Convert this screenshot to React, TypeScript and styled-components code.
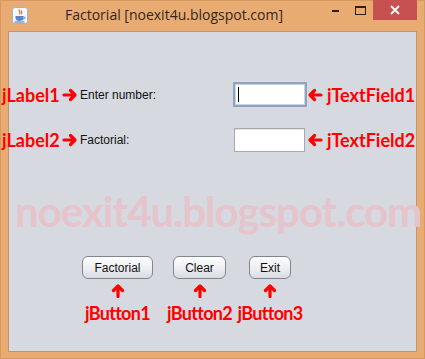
import React from "react";
import styled, { createGlobalStyle } from "styled-components";

const Global = createGlobalStyle`
  html, body { margin: 0; padding: 0; background: #e8ac73; }
  body { width: 425px; height: 359px; overflow: hidden; }
  * { box-sizing: border-box; }
`;

const RED = "#ff0000";

const Frame = styled.div`
  width: 425px;
  height: 359px;
  background: #e8ac73;
  box-shadow: inset 0 0 0 1px #d9995e;
  display: flex;
  flex-direction: column;
  padding: 0 8px 7px;
`;

const TitleBar = styled.div`
  height: 31px;
  display: flex;
  align-items: flex-start;
  flex-shrink: 0;
`;

const AppIcon = styled.svg`
  margin: 7px 0 0 4px;
  width: 16px;
  height: 17px;
  flex-shrink: 0;
`;

const Title = styled.div`
  margin: 5px 0 0 37px;
  font-family: "Open Sans", "Noto Sans", sans-serif;
  font-size: 14px;
  line-height: 20px;
  color: #33261b;
  flex: 1;
  white-space: nowrap;
`;

const Controls = styled.div`
  display: flex;
  align-items: flex-start;
`;

const CtrlBtn = styled.div<{ $w: number }>`
  width: ${(p) => p.$w}px;
  height: 20px;
  display: flex;
  align-items: center;
  justify-content: center;
`;

const CloseBtn = styled(CtrlBtn)`
  background: #c75050;
`;

const Content = styled.div`
  flex: 1;
  background: #d6d9df;
  border: 1px solid #c2946a;
  display: flex;
  flex-direction: column;
  padding-top: 50px;
`;

const FormRow = styled.div<{ $h: number; $mt: number }>`
  margin: ${(p) => p.$mt}px 0 0 -7px;
  height: ${(p) => p.$h}px;
  display: grid;
  grid-template-columns: 60px 18px 153px 74px 20px auto;
  align-items: center;
`;

const Note = styled.span`
  font-family: Lato, "Open Sans", sans-serif;
  font-weight: 700;
  font-size: 18px;
  line-height: 20px;
  color: ${RED};
  white-space: nowrap;
`;

const Label = styled.span`
  font-family: "Liberation Sans", Arial, sans-serif;
  font-size: 12px;
  color: #111;
`;

const Field = styled.div<{ $focused?: boolean }>`
  height: 100%;
  width: ${(p) => (p.$focused ? 74 : 71)}px;
  margin-left: ${(p) => (p.$focused ? 0 : 1)}px;
  background: #fff;
  border: ${(p) => (p.$focused ? "2px solid #8fa4bf" : "1px solid #a6a9ae")};
  box-shadow: ${(p) => (p.$focused ? "inset 0 0 0 1px #c7d3e0" : "inset 0 1px 0 #e4e6ea")};
  display: flex;
  align-items: center;
  padding-left: 3px;
`;

const Caret = styled.div`
  width: 1px;
  height: 15px;
  background: #000;
`;

const ArrowBox = styled.div`
  display: flex;
  align-items: center;
`;

const Watermark = styled.div`
  margin: 35px 0 0 6px;
  font-family: Lato, "Open Sans", sans-serif;
  font-weight: 700;
  font-size: 42px;
  line-height: 48px;
  letter-spacing: -1px;
  color: #e6c4cc;
  white-space: nowrap;
`;

const ButtonRow = styled.div`
  margin-top: 21px;
  display: flex;
  align-items: flex-start;
`;

const ButtonCol = styled.div<{ $w: number; $ml: number }>`
  width: ${(p) => p.$w}px;
  margin-left: ${(p) => p.$ml}px;
  display: flex;
  flex-direction: column;
  align-items: center;
`;

const Button = styled.button<{ $w: number }>`
  width: ${(p) => p.$w}px;
  height: 23px;
  padding: 0;
  border: 1px solid #80868f;
  border-radius: 6px;
  background: linear-gradient(#fdfdfd, #eceef1 55%, #d8dce3);
  font-family: "Liberation Sans", Arial, sans-serif;
  font-size: 12px;
  color: #111;
`;

const UpArrowWrap = styled.div`
  margin-top: 4px;
  height: 15px;
  display: flex;
`;

const ButtonNote = styled(Note)`
  margin-top: 4px;
  line-height: 22px;
  letter-spacing: -0.7px;
`;

const arrowStroke = {
  fill: "none",
  stroke: RED,
  strokeWidth: 3.2,
  strokeLinecap: "round" as const,
  strokeLinejoin: "round" as const,
};

const RightArrow = () => (
  <svg width="16" height="14" viewBox="0 0 16 14">
    <path d="M2 7 H12.5 M8.5 2.5 L13 7 L8.5 11.5" {...arrowStroke} />
  </svg>
);

const LeftArrow = () => (
  <svg width="16" height="14" viewBox="0 0 16 14">
    <path d="M14 7 H3.5 M7.5 2.5 L3 7 L7.5 11.5" {...arrowStroke} />
  </svg>
);

const UpArrow = () => (
  <svg width="14" height="15" viewBox="0 0 14 15">
    <path d="M7 13.5 V3 M2.5 7.5 L7 3 L11.5 7.5" {...arrowStroke} />
  </svg>
);

export default function App() {
  return (
    <>
      <Global />
      <Frame>
        <TitleBar>
          <AppIcon viewBox="0 0 16 17">
            <rect x="0.5" y="0.5" width="15" height="16" rx="2" fill="#f4f7fb" stroke="#9fb3cc" />
            <path d="M7.5 2.5 C5.8 4 9.5 5 7.5 7.5 M9.6 3.5 C8.6 4.6 10.8 5.4 9.4 7.2" fill="none" stroke="#e06a2a" strokeWidth="1.2" />
            <path d="M3.5 9 H11.5 V11 C11.5 13 9.8 14 7.5 14 C5.2 14 3.5 13 3.5 11 Z" fill="#5a86c4" />
            <path d="M11.5 9.8 C13.5 9.8 13.5 12 11.2 12" fill="none" stroke="#5a86c4" strokeWidth="1" />
            <path d="M2.5 15 H12.5" stroke="#3f6fb0" strokeWidth="1" />
          </AppIcon>
          <Title>Factorial [noexit4u.blogspot.com]</Title>
          <Controls>
            <CtrlBtn $w={22}>
              <svg width="8" height="4" viewBox="0 0 8 4">
                <rect x="0" y="2" width="7" height="2" fill="#2b2016" />
              </svg>
            </CtrlBtn>
            <CtrlBtn $w={26}>
              <svg width="11" height="9" viewBox="0 0 11 9">
                <rect x="0.5" y="0.5" width="10" height="8" fill="none" stroke="#2b2016" />
                <rect x="0.5" y="0.5" width="10" height="1.5" fill="#2b2016" />
              </svg>
            </CtrlBtn>
            <CloseBtn $w={44}>
              <svg width="10" height="10" viewBox="0 0 10 10">
                <path d="M1 1 L9 9 M9 1 L1 9" stroke="#fff" strokeWidth="1.8" />
              </svg>
            </CloseBtn>
          </Controls>
        </TitleBar>
        <Content>
          <FormRow $h={25} $mt={0}>
            <Note>jLabel1</Note>
            <ArrowBox><RightArrow /></ArrowBox>
            <Label>Enter number:</Label>
            <Field $focused>
              <Caret />
            </Field>
            <ArrowBox><LeftArrow /></ArrowBox>
            <Note>jTextField1</Note>
          </FormRow>
          <FormRow $h={24} $mt={21}>
            <Note>jLabel2</Note>
            <ArrowBox><RightArrow /></ArrowBox>
            <Label>Factorial:</Label>
            <Field />
            <ArrowBox><LeftArrow /></ArrowBox>
            <Note>jTextField2</Note>
          </FormRow>
          <Watermark>noexit4u.blogspot.com</Watermark>
          <ButtonRow>
            <ButtonCol $w={71} $ml={73}>
              <Button $w={71}>Factorial</Button>
              <UpArrowWrap><UpArrow /></UpArrowWrap>
              <ButtonNote>jButton1</ButtonNote>
            </ButtonCol>
            <ButtonCol $w={63} $ml={15}>
              <Button $w={53}>Clear</Button>
              <UpArrowWrap><UpArrow /></UpArrowWrap>
              <ButtonNote>jButton2</ButtonNote>
            </ButtonCol>
            <ButtonCol $w={62} $ml={8}>
              <Button $w={42}>Exit</Button>
              <UpArrowWrap><UpArrow /></UpArrowWrap>
              <ButtonNote>jButton3</ButtonNote>
            </ButtonCol>
          </ButtonRow>
        </Content>
      </Frame>
    </>
  );
}
